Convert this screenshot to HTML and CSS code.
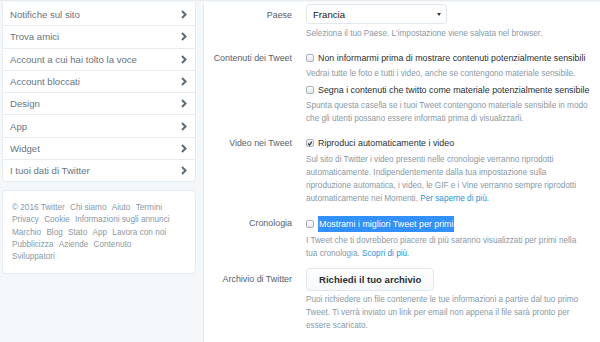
FILE: index.html
```html
<!DOCTYPE html>
<html lang="it">
<head>
    <meta charset="UTF-8">
    <title>Impostazioni - Twitter</title>
    <link rel="stylesheet" href="styles.css">
</head>
<body>

<div class="page">
    <div class="sidebar">
        <ul class="menu">
            <li><a href="#">Notifiche sul sito <svg class="chev" viewBox="0 0 6 9"><polyline points="1,1 4.5,4.5 1,8"/></svg></a></li>
            <li><a href="#">Trova amici <svg class="chev" viewBox="0 0 6 9"><polyline points="1,1 4.5,4.5 1,8"/></svg></a></li>
            <li><a href="#">Account a cui hai tolto la voce <svg class="chev" viewBox="0 0 6 9"><polyline points="1,1 4.5,4.5 1,8"/></svg></a></li>
            <li><a href="#">Account bloccati <svg class="chev" viewBox="0 0 6 9"><polyline points="1,1 4.5,4.5 1,8"/></svg></a></li>
            <li><a href="#">Design <svg class="chev" viewBox="0 0 6 9"><polyline points="1,1 4.5,4.5 1,8"/></svg></a></li>
            <li><a href="#">App <svg class="chev" viewBox="0 0 6 9"><polyline points="1,1 4.5,4.5 1,8"/></svg></a></li>
            <li><a href="#">Widget <svg class="chev" viewBox="0 0 6 9"><polyline points="1,1 4.5,4.5 1,8"/></svg></a></li>
            <li><a href="#">I tuoi dati di Twitter <svg class="chev" viewBox="0 0 6 9"><polyline points="1,1 4.5,4.5 1,8"/></svg></a></li>
        </ul>

        <div class="footer">
            <span>&copy; 2016 Twitter</span>
            <a href="#">Chi siamo</a>
            <a href="#">Aiuto</a>
            <a href="#">Termini</a>
            <a href="#">Privacy</a>
            <a href="#">Cookie</a>
            <a href="#">Informazioni sugli annunci</a>
            <a href="#">Marchio</a>
            <a href="#">Blog</a>
            <a href="#">Stato</a>
            <a href="#">App</a>
            <a href="#">Lavora con noi</a>
            <a href="#">Pubblicizza</a>
            <a href="#">Aziende</a>
            <a href="#">Contenuto</a>
            <a href="#">Sviluppatori</a>
        </div>
    </div>

    <div class="content">
        <!-- Paese -->
        <div class="field">
            <div class="label label-select">Paese</div>
            <div class="controls">
                <div class="select">
                    <span>Francia</span>
                    <span class="caret"></span>
                </div>
                <p class="hint">Seleziona il tuo Paese. L'impostazione viene salvata nel browser.</p>
            </div>
        </div>

        <!-- Contenuti -->
        <div class="field">
            <div class="label">Contenuti dei Tweet</div>
            <div class="controls">
                <label class="check"><span class="box"></span>Non informarmi prima di mostrare contenuti potenzialmente sensibili</label>
                <p class="hint">Vedrai tutte le foto e tutti i video, anche se contengono materiale sensibile.</p>
                <label class="check"><span class="box"></span>Segna i contenuti che twitto come materiale potenzialmente sensibile</label>
                <p class="hint">Spunta questa casella se i tuoi Tweet contengono materiale sensibile in modo che gli utenti possano essere informati prima di visualizzarli.</p>
            </div>
        </div>

        <!-- Video -->
        <div class="field">
            <div class="label">Video nei Tweet</div>
            <div class="controls">
                <label class="check"><span class="box checked"><svg viewBox="0 0 8 8"><polyline points="1.5,4 3.3,6 6.5,1.5"/></svg></span>Riproduci automaticamente i video</label>
                <p class="hint">Sul sito di Twitter i video presenti nelle cronologie verranno riprodotti automaticamente. Indipendentemente dalla tua impostazione sulla<br>riproduzione automatica, i video, le GIF e i Vine verranno sempre riprodotti automaticamente nei Momenti. <a href="#">Per saperne di più</a>.</p>
            </div>
        </div>

        <!-- Cronologia -->
        <div class="field">
            <div class="label">Cronologia</div>
            <div class="controls">
                <label class="check"><span class="box"></span><span class="selected">Mostrami i migliori Tweet per primi</span></label>
                <p class="hint">I Tweet che ti dovrebbero piacere di più saranno visualizzati per primi nella<br>tua cronologia. <a href="#">Scopri di più</a>.</p>
            </div>
        </div>

        <!-- Archivio -->
        <div class="field field-last">
            <div class="label label-btn">Archivio di Twitter</div>
            <div class="controls">
                <button class="btn">Richiedi il tuo archivio</button>
                <p class="hint hint-btn">Puoi richiedere un file contenente le tue informazioni a partire dal tuo primo Tweet. Ti verrà inviato un link per email non appena il file sarà pronto per essere scaricato.</p>
            </div>
        </div>
    </div>
</div>

</body>
</html>
```

FILE: styles.css
```css
* {
    box-sizing: border-box;
}

body {
    margin: 0;
    background-color: #f5f8fa;
    font-family: "Liberation Sans", Arial, sans-serif;
    font-size: 8.9px;
    color: #292f33;
}

a {
    text-decoration: none;
}

.page {
    display: flex;
    align-items: flex-start;
    gap: 7px;
    padding: 1px 0 0 2px;
    border-top: 1px solid #e6ecf0;
}

/* left column */
.sidebar {
    width: 194px;
    flex-shrink: 0;
}

.menu {
    list-style: none;
    margin: 0;
    padding: 2px 0 0;
    background-color: #fff;
    border: 1px solid #e6ecf0;
    border-top: none;
    border-radius: 0 0 4px 4px;
}

.menu li {
    border-bottom: 1px solid #e6ecf0;
}

.menu li:last-child {
    border-bottom: none;
}

.menu a {
    display: flex;
    justify-content: space-between;
    align-items: center;
    height: 21.3px;
    padding: 0 8px 0 7px;
    font-size: 9.6px;
    color: #66757f;
}

.chev {
    width: 6px;
    height: 9px;
    fill: none;
    stroke: #5c6a74;
    stroke-width: 2;
}

.footer {
    margin-top: 8px;
    padding: 11px 17px 10px 9px;
    background-color: #fff;
    border: 1px solid #e6ecf0;
    border-radius: 4px;
    font-size: 8.2px;
    line-height: 12.1px;
    color: #8899a6;
}

.footer span,
.footer a {
    display: inline-block;
    margin-right: 3px;
    color: #8899a6;
}

/* settings form */
.content {
    flex: 1;
    background-color: #fff;
    border-left: 1px solid #e6ecf0;
    min-height: 340px;
    padding-top: 2px;
}

.field {
    display: grid;
    grid-template-columns: 88px 1fr;
    column-gap: 14px;
    margin-bottom: 11px;
}

.field-last {
    margin-top: -3px;
}

.label {
    text-align: right;
    color: #55606a;
    line-height: 14px;
}

.label-select {
    padding-top: 4px;
}

.label-btn {
    padding-top: 4px;
}

.controls {
    min-width: 0;
    padding-right: 5px;
}

.select {
    display: flex;
    justify-content: space-between;
    align-items: center;
    width: 141px;
    height: 20px;
    padding: 0 5px 0 6px;
    border: 1px solid #e1e8ed;
    border-radius: 3px;
    font-size: 9.6px;
    color: #14171a;
    background-color: #fff;
}

.caret {
    width: 0;
    height: 0;
    border-left: 2.5px solid transparent;
    border-right: 2.5px solid transparent;
    border-top: 3.5px solid #333;
}

.hint {
    margin: 2.5px 0 0;
    font-size: 8.2px;
    line-height: 13px;
    color: #8899a6;
}

.hint + .check {
    margin-top: 2.5px;
}

.hint a {
    color: #1b95e0;
}

.hint-btn {
    margin-top: 2px;
}

.check {
    display: flex;
    align-items: center;
    line-height: 14px;
    color: #292f33;
    white-space: nowrap;
}

.box {
    display: inline-flex;
    align-items: center;
    justify-content: center;
    width: 8px;
    height: 8px;
    margin-right: 4px;
    border: 1px solid #a9b2b9;
    border-radius: 2px;
    background: linear-gradient(#fdfdfd, #e4e7ea);
}

.box svg {
    width: 7px;
    height: 7px;
    fill: none;
    stroke: #2b3136;
    stroke-width: 1.6;
}

.selected {
    background-color: #3390ff;
    color: #fff;
    padding: 1px 1px;
}

.btn {
    height: 23px;
    padding: 0 12px;
    font-family: inherit;
    font-size: 9.6px;
    font-weight: bold;
    color: #292f33;
    background: linear-gradient(#fff, #f5f8fa);
    border: 1px solid #e1e8ed;
    border-radius: 4px;
}
```
